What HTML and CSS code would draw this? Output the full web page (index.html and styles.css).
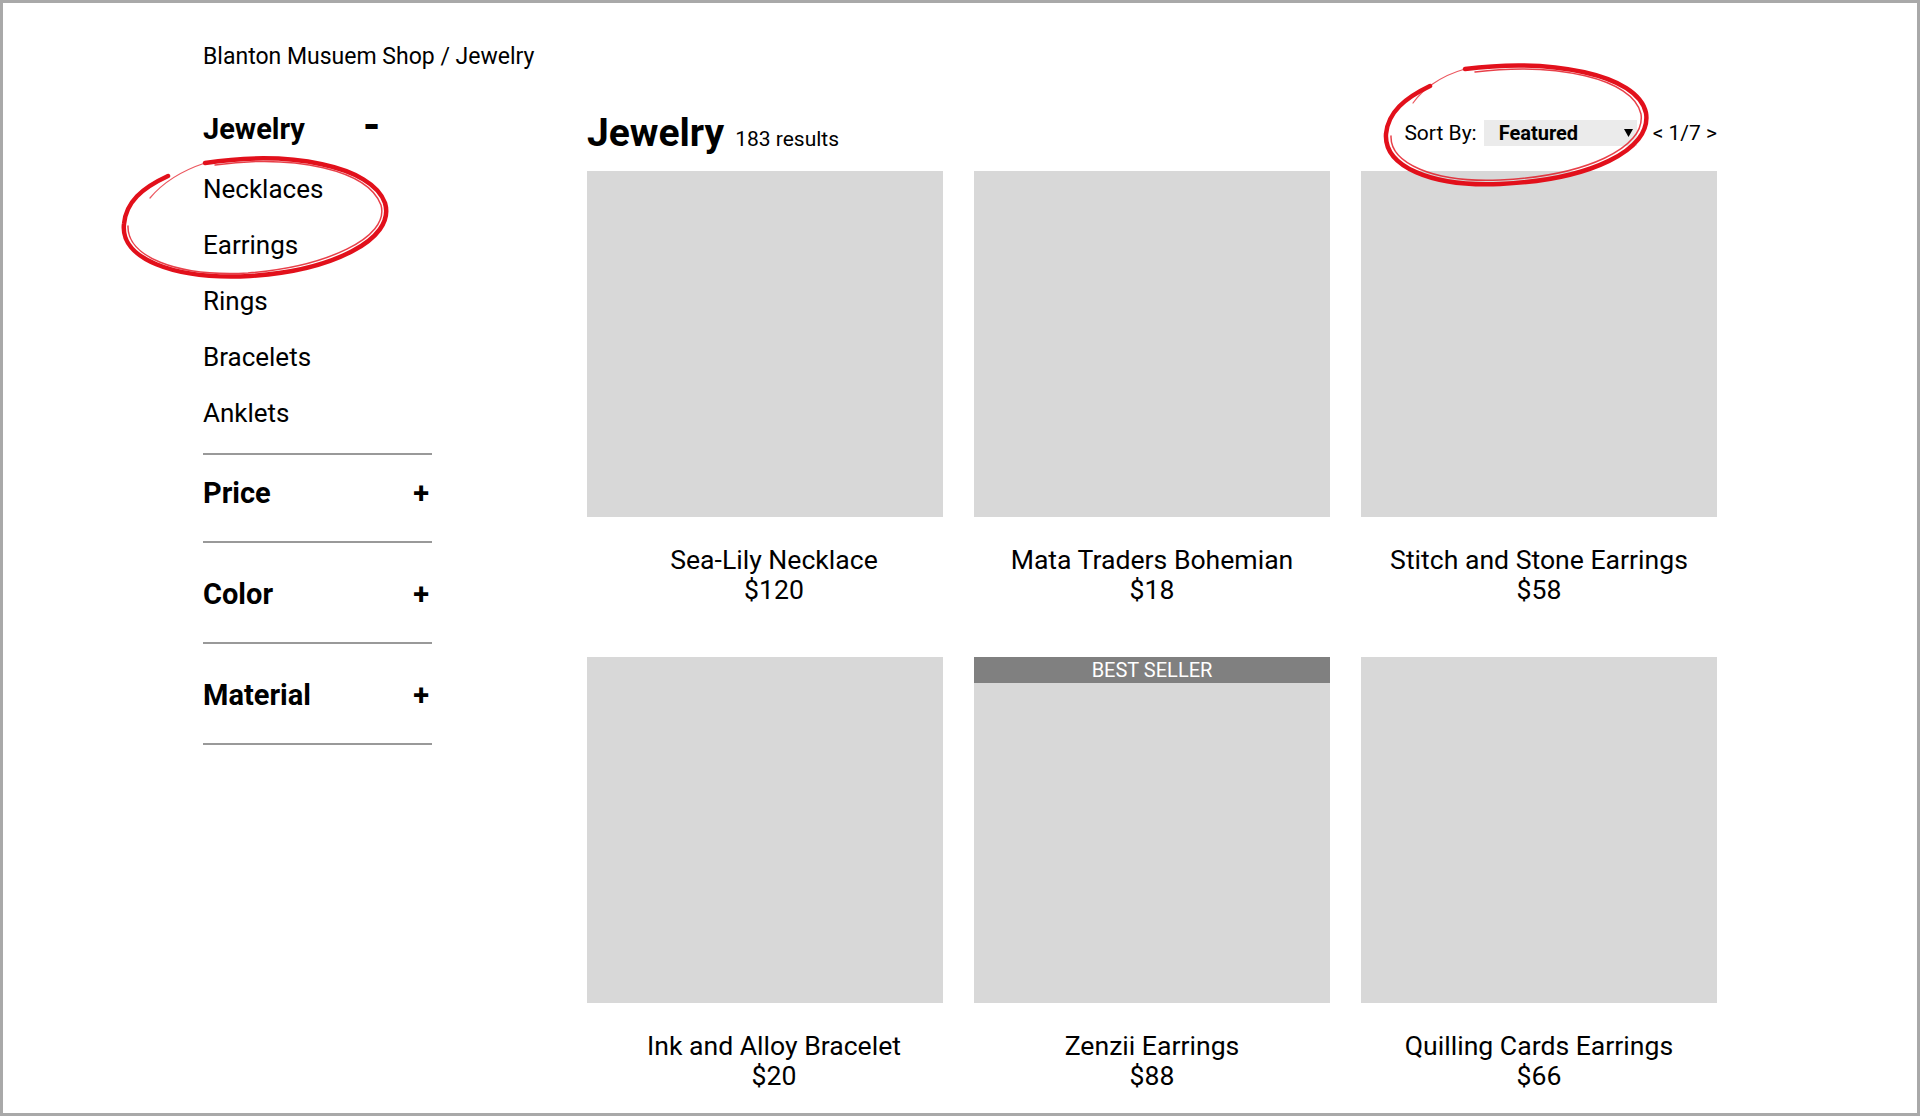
FILE: index.html
```html
<!DOCTYPE html>
<html lang="en">
<head>
<meta charset="UTF-8">
<meta name="viewport" content="width=device-width, initial-scale=1.0">
<title>Jewelry - Blanton Museum Shop</title>
<link rel="stylesheet" href="styles.css">
</head>
<body>

<div class="frame">
    <div class="breadcrumb">Blanton Musuem Shop / Jewelry</div>

    <div class="layout">
        <aside class="sidebar">
            <div class="cat-head">
                <span>Jewelry</span>
                <span class="minus">-</span>
            </div>
            <ul class="cat-list">
                <li>Necklaces</li>
                <li>Earrings</li>
                <li>Rings</li>
                <li>Bracelets</li>
                <li>Anklets</li>
            </ul>
            <div class="filter first">
                <span>Price</span>
                <span>+</span>
            </div>
            <div class="filter">
                <span>Color</span>
                <span>+</span>
            </div>
            <div class="filter last">
                <span>Material</span>
                <span>+</span>
            </div>
        </aside>

        <main class="results">
            <div class="results-head">
                <div class="title">
                    <h1>Jewelry</h1>
                    <span class="count">183 results</span>
                </div>
                <div class="controls">
                    <span>Sort By:</span>
                    <div class="select">
                        <span>Featured</span>
                        <svg width="9" height="8" viewBox="0 0 9 8"><polygon points="0,0 9,0 4.5,8" fill="#000"/></svg>
                    </div>
                    <span class="pager">&lt; 1/7 &gt;</span>
                </div>
            </div>

            <div class="grid">
                <div class="product">
                    <div class="thumb"></div>
                    <div class="caption">
                        <div>Sea-Lily Necklace</div>
                        <div>$120</div>
                    </div>
                </div>
                <div class="product">
                    <div class="thumb"></div>
                    <div class="caption">
                        <div>Mata Traders Bohemian</div>
                        <div>$18</div>
                    </div>
                </div>
                <div class="product">
                    <div class="thumb"></div>
                    <div class="caption">
                        <div>Stitch and Stone Earrings</div>
                        <div>$58</div>
                    </div>
                </div>
                <div class="product">
                    <div class="thumb"></div>
                    <div class="caption">
                        <div>Ink and Alloy Bracelet</div>
                        <div>$20</div>
                    </div>
                </div>
                <div class="product">
                    <div class="thumb">
                        <div class="badge">BEST SELLER</div>
                    </div>
                    <div class="caption">
                        <div>Zenzii Earrings</div>
                        <div>$88</div>
                    </div>
                </div>
                <div class="product">
                    <div class="thumb"></div>
                    <div class="caption">
                        <div>Quilling Cards Earrings</div>
                        <div>$66</div>
                    </div>
                </div>
            </div>
        </main>
    </div>
</div>

<!-- red pen marks drawn over the wireframe -->
<svg class="marks" width="1920" height="1116" viewBox="0 0 1920 1116">
    <g fill="none" stroke="#e2101b" stroke-linecap="round">
        <path d="M150,198 C160,186 178,172 205,163" stroke-width="1.2" opacity="0.7"/>
        <path d="M205,163 C290,150 372,166 385,203 C396,240 330,271 250,276 C172,280 120,258 124,224 C126,202 142,188 168,176" stroke-width="4.5"/>
        <path d="M215,165 C295,154 368,170 381,205 C390,238 325,267 248,273 C175,277 127,256 128,226" stroke-width="1.5" opacity="0.8"/>

        <path d="M1413,103 C1422,90 1440,76 1465,69" stroke-width="1.2" opacity="0.7"/>
        <path d="M1465,69 C1550,58 1638,74 1646,113 C1652,150 1590,180 1500,184 C1430,187 1384,166 1386,134 C1388,112 1405,98 1430,86" stroke-width="4.5"/>
        <path d="M1475,72 C1555,62 1633,78 1641,114 C1646,148 1585,176 1500,180 C1433,183 1390,163 1391,136" stroke-width="1.5" opacity="0.8"/>
    </g>
</svg>

</body>
</html>
```

FILE: styles.css
```css
body {
    margin: 0;
    font-family: Roboto, "Liberation Sans", sans-serif;
    color: #000;
    background: #fff;
}
.frame {
    box-sizing: border-box;
    height: 1116px;
    border: 3px solid #a9a9a9;
    padding: 40px 0 0 200px;
    overflow: hidden;
}
.breadcrumb {
    font-size: 23px;
    line-height: 28px;
}
.layout {
    display: flex;
    gap: 155px;
    margin-top: 35px;
}

/* sidebar */
.sidebar {
    width: 229px;
}
.cat-head {
    display: flex;
    align-items: baseline;
    font-size: 29px;
    line-height: 36px;
    font-weight: bold;
}
.minus {
    font-size: 44px;
    line-height: 36px;
    margin-left: 58px;
    position: relative;
    top: 1px;
}
.cat-list {
    list-style: none;
    margin: 14px 0 12px;
    padding: 0;
}
.cat-list li {
    font-size: 26px;
    line-height: 56px;
}
.filter {
    display: flex;
    justify-content: space-between;
    font-size: 29px;
    line-height: 36px;
    font-weight: bold;
    border-top: 2px solid #999;
    padding: 33px 3px 30px 0;
}
.filter.first {
    padding-top: 20px;
}
.filter.last {
    border-bottom: 2px solid #999;
}

/* results */
.results {
    width: 1130px;
}
.results-head {
    display: flex;
    justify-content: space-between;
    align-items: flex-start;
    height: 51px;
}
.title {
    display: flex;
    align-items: baseline;
    padding-top: 3px;
}
.title h1 {
    margin: 0;
    font-size: 39px;
    line-height: 48px;
}
.count {
    font-size: 21px;
    margin-left: 11px;
}
.controls {
    display: flex;
    align-items: center;
    font-size: 21px;
    line-height: 26px;
    padding-top: 14px;
}
.select {
    display: flex;
    justify-content: space-between;
    align-items: center;
    width: 153px;
    height: 26px;
    box-sizing: border-box;
    padding: 0 4px 0 15px;
    margin-left: 7px;
    background-color: #ebebeb;
    font-size: 20px;
    font-weight: bold;
}
.pager {
    margin-left: 16px;
}
.grid {
    display: grid;
    grid-template-columns: repeat(3, 356px);
    column-gap: 31px;
    row-gap: 52px;
    margin-top: 14px;
}
.thumb {
    position: relative;
    height: 346px;
    background-color: #d8d8d8;
}
.badge {
    position: absolute;
    top: 0;
    left: 0;
    right: 0;
    height: 26px;
    line-height: 26px;
    background-color: #808080;
    color: #fff;
    font-size: 20px;
    text-align: center;
}
.caption {
    padding-top: 28px;
    font-size: 26.6px;
    line-height: 30px;
    text-align: center;
}
.product:nth-child(3n+1) .caption {
    padding-left: 18px;
}
.marks {
    position: absolute;
    top: 0;
    left: 0;
    pointer-events: none;
}
```
